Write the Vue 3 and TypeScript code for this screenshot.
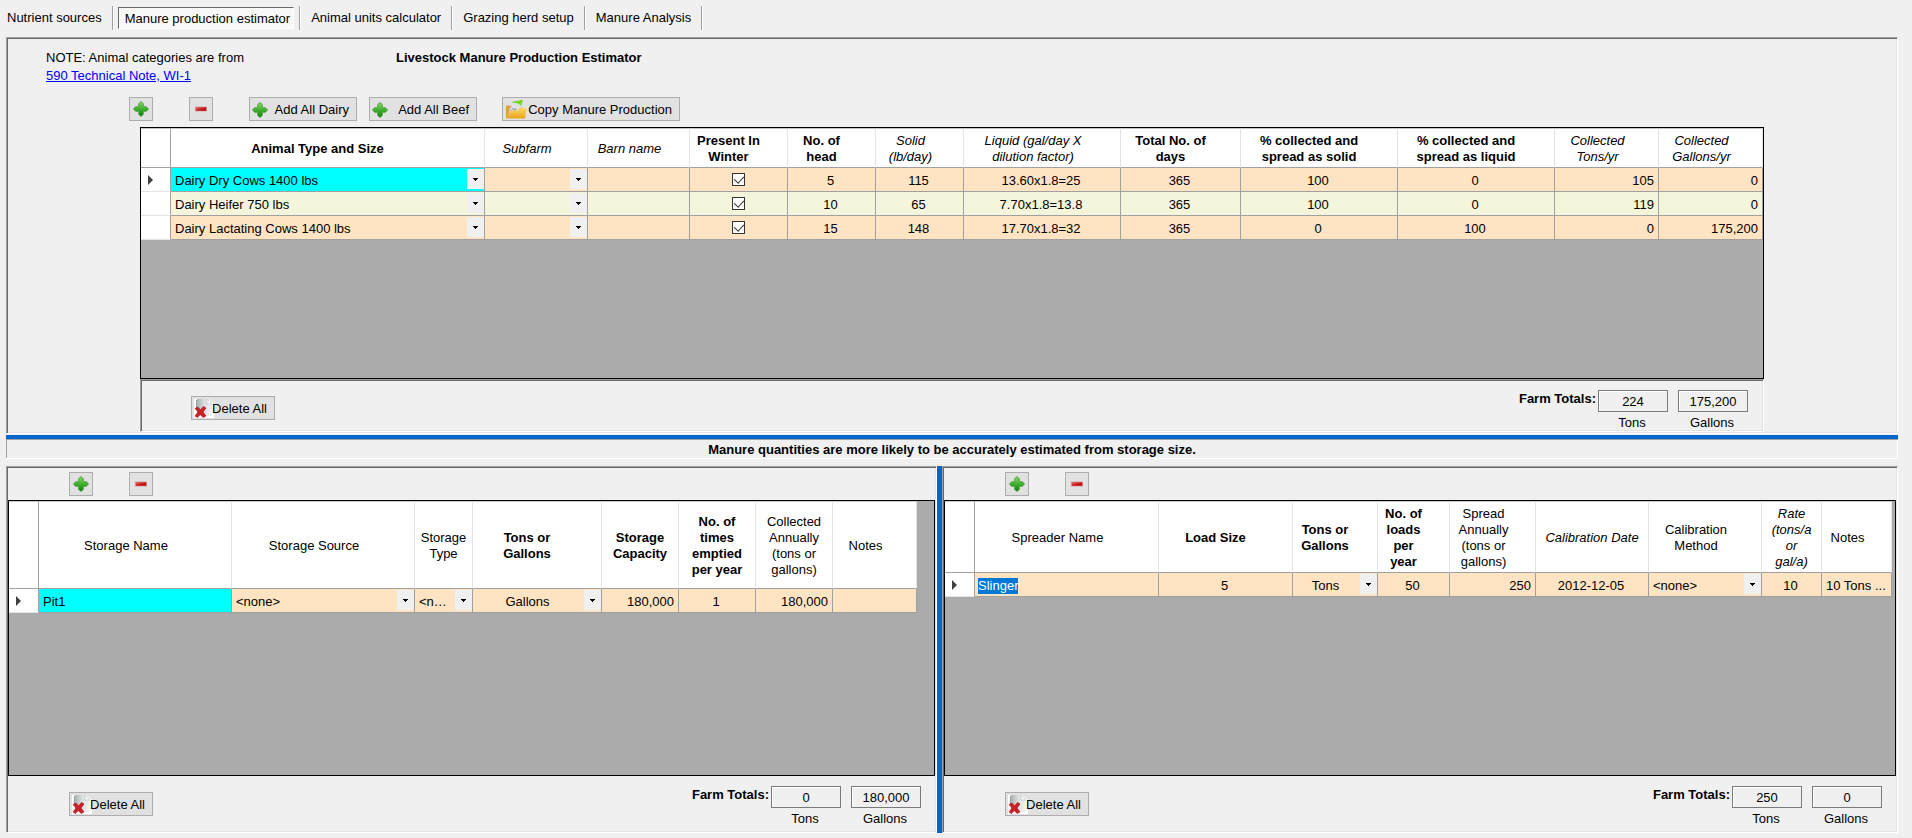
<script setup lang="ts">
import { onMounted, ref } from 'vue'

interface Column {
  lines: string[]
  width: number
  look?: 'bold' | 'italic'
  align?: 'center' | 'end'
  kind?: 'select' | 'check' | 'input'
  snug?: boolean
}

interface GridModel {
  label: string
  size: 'low' | 'tall' | 'mid'
  stretch?: boolean
  columns: Column[]
  rows: (string | boolean)[][]
  highlightFirst?: boolean
}

interface Total {
  id: string
  unit: string
  value: string
}

const tabs = [
  'Nutrient sources',
  'Manure production estimator',
  'Animal units calculator',
  'Grazing herd setup',
  'Manure Analysis',
]
const activeTab = ref(1)

const animals: GridModel = {
  label: 'Livestock manure production',
  size: 'low',
  stretch: true,
  highlightFirst: true,
  columns: [
    { lines: ['Animal Type and Size'], width: 314, look: 'bold', kind: 'select' },
    { lines: ['Subfarm'], width: 103, look: 'italic', kind: 'select' },
    { lines: ['Barn name'], width: 102, look: 'italic' },
    { lines: ['Present In', 'Winter'], width: 98, look: 'bold', align: 'center', kind: 'check' },
    { lines: ['No. of', 'head'], width: 88, look: 'bold', align: 'center' },
    { lines: ['Solid', '(lb/day)'], width: 88, look: 'italic', align: 'center' },
    { lines: ['Liquid (gal/day X', 'dilution factor)'], width: 157, look: 'italic', align: 'center' },
    { lines: ['Total No. of', 'days'], width: 120, look: 'bold', align: 'center' },
    { lines: ['% collected and', 'spread as solid'], width: 157, look: 'bold', align: 'center' },
    { lines: ['% collected and', 'spread as liquid'], width: 157, look: 'bold', align: 'center' },
    { lines: ['Collected', 'Tons/yr'], width: 104, look: 'italic', align: 'end' },
    { lines: ['Collected', 'Gallons/yr'], width: 104, look: 'italic', align: 'end' },
  ],
  rows: [
    ['Dairy Dry Cows 1400 lbs', '', '', true, '5', '115', '13.60x1.8=25', '365', '100', '0', '105', '0'],
    ['Dairy Heifer 750 lbs', '', '', true, '10', '65', '7.70x1.8=13.8', '365', '100', '0', '119', '0'],
    ['Dairy Lactating Cows 1400 lbs', '', '', true, '15', '148', '17.70x1.8=32', '365', '0', '100', '0', '175,200'],
  ],
}

const storage: GridModel = {
  label: 'Manure storage',
  size: 'tall',
  highlightFirst: true,
  columns: [
    { lines: ['Storage Name'], width: 193 },
    { lines: ['Storage Source'], width: 183, kind: 'select' },
    { lines: ['Storage', 'Type'], width: 58, kind: 'select', snug: true },
    { lines: ['Tons or', 'Gallons'], width: 129, look: 'bold', align: 'center', kind: 'select' },
    { lines: ['Storage', 'Capacity'], width: 77, look: 'bold', align: 'end', snug: true },
    { lines: ['No. of', 'times', 'emptied', 'per year'], width: 77, look: 'bold', align: 'center', snug: true },
    { lines: ['Collected', 'Annually', '(tons or', 'gallons)'], width: 77, align: 'end', snug: true },
    { lines: ['Notes'], width: 84 },
  ],
  rows: [['Pit1', '<none>', '<none>', 'Gallons', '180,000', '1', '180,000', '']],
}

const spreaders: GridModel = {
  label: 'Manure spreaders',
  size: 'mid',
  columns: [
    { lines: ['Spreader Name'], width: 184, kind: 'input' },
    { lines: ['Load Size'], width: 134, look: 'bold', align: 'center' },
    { lines: ['Tons or', 'Gallons'], width: 85, look: 'bold', align: 'center', kind: 'select' },
    { lines: ['No. of', 'loads', 'per', 'year'], width: 72, look: 'bold', align: 'center' },
    { lines: ['Spread', 'Annually', '(tons or', 'gallons)'], width: 86, align: 'end' },
    { lines: ['Calibration Date'], width: 113, look: 'italic', align: 'center', snug: true },
    { lines: ['Calibration', 'Method'], width: 113, kind: 'select' },
    { lines: ['Rate', '(tons/a', 'or', 'gal/a)'], width: 60, look: 'italic', align: 'center', snug: true },
    { lines: ['Notes'], width: 70 },
  ],
  rows: [['Slinger', '5', 'Tons', '50', '250', '2012-12-05', '<none>', '10', '10 Tons ...']],
}

const sections: { key: string; grid: GridModel; totals: Total[] }[] = [
  {
    key: 'animals',
    grid: animals,
    totals: [
      { id: 'farm-tons', unit: 'Tons', value: '224' },
      { id: 'farm-gallons', unit: 'Gallons', value: '175,200' },
    ],
  },
  {
    key: 'storage',
    grid: storage,
    totals: [
      { id: 'storage-tons', unit: 'Tons', value: '0' },
      { id: 'storage-gallons', unit: 'Gallons', value: '180,000' },
    ],
  },
  {
    key: 'spreaders',
    grid: spreaders,
    totals: [
      { id: 'spreader-tons', unit: 'Tons', value: '250' },
      { id: 'spreader-gallons', unit: 'Gallons', value: '0' },
    ],
  },
]

onMounted(() => {
  document.querySelector<HTMLInputElement>('.cell-input')?.select()
})
</script>

<template>
  <div class="page">
    <svg class="defs" aria-hidden="true">
      <defs>
        <linearGradient id="green" x1="0" y1="0" x2="0" y2="1">
          <stop offset="0" stop-color="#8fd66c" />
          <stop offset="0.5" stop-color="#3fb02c" />
          <stop offset="1" stop-color="#0f7d10" />
        </linearGradient>
        <linearGradient id="red" x1="0" y1="0" x2="1" y2="1">
          <stop offset="0" stop-color="#d98080" />
          <stop offset="0.5" stop-color="#cf1f1f" />
          <stop offset="1" stop-color="#a50d0d" />
        </linearGradient>
        <linearGradient id="folder" x1="0" y1="0" x2="0" y2="1">
          <stop offset="0" stop-color="#fcd76a" />
          <stop offset="1" stop-color="#e8a31a" />
        </linearGradient>
        <linearGradient id="paper" x1="0" y1="0" x2="1" y2="0">
          <stop offset="0" stop-color="#a9b3b3" />
          <stop offset="0.5" stop-color="#dde1e1" />
          <stop offset="1" stop-color="#f4f4f4" />
        </linearGradient>
        <symbol id="plus" viewBox="0 0 16 16">
          <path d="M8 .5 10.3 2.6V5.7H13.4L15.5 8 13.4 10.3H10.3V13.4L8 15.5 5.7 13.4V10.3H2.6L.5 8 2.6 5.7H5.7V2.6Z" fill="url(#green)" stroke="#3f9a35" stroke-width=".8" stroke-linejoin="round" />
        </symbol>
        <symbol id="minus" viewBox="0 0 16 16">
          <rect x="2.5" y="6" width="11" height="4" fill="url(#red)" stroke="#c77" stroke-width=".5" />
        </symbol>
        <symbol id="copy" viewBox="0 0 22 20">
          <path d="M1 18V6.5Q1 5.5 2 5.5H5L7 7H17V18Z" fill="#dda43a" />
          <path d="M3.5 15 5 8 9 6 16 7V13Z" fill="#dfe4e8" />
          <path d="M6 11 8 8 9 10 11 8M7 12 12 9" stroke="#9aa4ac" fill="none" />
          <path d="M6 3Q10 0 15 1L14 0H18L16 6 14 4Q10 2 6 3Z" fill="#78d329" />
          <path d="M5.5 10.5H12L14 8H21.5L20 18.5H1.2Z" fill="url(#folder)" />
        </symbol>
        <symbol id="remove" viewBox="0 0 20 19">
          <path d="M0 0H14L20 5V19H0Z" fill="#fff" />
          <path d="M3 0H13L18 5V17H3Z" fill="url(#paper)" />
          <path d="M13 0V5H18Z" fill="#fff" stroke="#b8c0c0" stroke-width=".7" />
          <path d="M2.5 1V9" stroke="#98a3a3" />
          <path d="M1 9.5 4 8 6.5 11 9.5 7.5 12 9 9 13 12 17 9 18.5 6.3 15.3 3.5 18.5 1 17 4 13Z" fill="#cf2027" stroke="#9c1218" stroke-width=".6" />
        </symbol>
      </defs>
    </svg>

    <nav class="tabs" aria-label="Sections">
      <div v-for="(tab, i) in tabs" :key="tab" class="tab-slot">
        <button type="button" class="tab" :class="{ active: i === activeTab }" @click="activeTab = i">{{ tab }}</button>
      </div>
    </nav>

    <main class="content">
      <template v-for="s in sections" :key="s.key">
        <section class="panel sunken" :class="{ wide: s.key === 'animals' }">
          <div v-if="s.key === 'animals'" class="intro">
            <p class="note">NOTE: Animal categories are from<br /><a href="#technical-note">590 Technical Note, WI-1</a></p>
            <h1>Livestock Manure Production Estimator</h1>
          </div>
          <div class="toolbar">
            <button type="button" class="btn icon-btn" aria-label="Add row"><svg class="ic"><use href="#plus" /></svg></button>
            <button type="button" class="btn icon-btn" aria-label="Remove row"><svg class="ic"><use href="#minus" /></svg></button>
            <template v-if="s.key === 'animals'">
              <div class="pair">
                <button type="button" class="btn add-btn"><svg class="ic"><use href="#plus" /></svg>Add All Dairy</button>
                <button type="button" class="btn add-btn"><svg class="ic"><use href="#plus" /></svg>Add All Beef</button>
              </div>
              <button type="button" class="btn copy-btn"><svg class="ic-copy"><use href="#copy" /></svg>Copy Manure Production</button>
            </template>
          </div>

          <div class="grid-box">
            <table :class="[s.grid.size, { stretch: s.grid.stretch }]" :aria-label="s.grid.label">
              <colgroup>
                <col class="marker-col" />
                <col v-for="(c, i) in s.grid.columns" :key="i" :style="{ width: c.width + 'px' }" />
              </colgroup>
              <thead>
                <tr>
                  <td class="corner"></td>
                  <th v-for="(c, i) in s.grid.columns" :key="i" scope="col" :class="[c.look, { snug: c.snug }]">
                    <template v-for="(line, n) in c.lines" :key="n"><br v-if="n" />{{ line }}</template>
                  </th>
                </tr>
              </thead>
              <tbody>
                <tr v-for="(row, r) in s.grid.rows" :key="r">
                  <td class="marker">
                    <svg v-if="r === 0" width="5" height="10" viewBox="0 0 5 10"><path d="M0 0 5 5 0 10Z" fill="#404040" /></svg>
                  </td>
                  <td
                    v-for="(c, i) in s.grid.columns"
                    :key="i"
                    :class="[c.align, { control: c.kind, current: s.grid.highlightFirst && r === 0 && i === 0 }]"
                  >
                    <div v-if="c.kind === 'select'" class="combo">
                      <select :aria-label="c.lines.join(' ')"><option>{{ row[i] }}</option></select>
                      <span class="drop"><svg width="5" height="3" viewBox="0 0 5 3"><path d="M0 0H5V1H4V2H3V3H2V2H1V1H0Z" /></svg></span>
                    </div>
                    <input v-else-if="c.kind === 'check'" type="checkbox" class="check" :checked="row[i] === true" :aria-label="c.lines.join(' ')" />
                    <input v-else-if="c.kind === 'input'" type="text" class="cell-input" :value="row[i]" :aria-label="c.lines.join(' ')" />
                    <template v-else>{{ row[i] }}</template>
                  </td>
                </tr>
              </tbody>
            </table>
          </div>

          <div class="footer" :class="{ sunken: s.key === 'animals' }">
            <button type="button" class="btn delete-btn"><svg class="ic-del"><use href="#remove" /></svg>Delete All</button>
            <div class="totals">
              <strong>Farm Totals:</strong>
              <div v-for="t in s.totals" :key="t.id" class="total">
                <input :id="t.id" type="text" readonly :value="t.value" />
                <label :for="t.id">{{ t.unit }}</label>
              </div>
            </div>
          </div>
        </section>
        <p v-if="s.key === 'animals'" class="message">Manure quantities are more likely to be accurately estimated from storage size.</p>
        <div v-if="s.key === 'storage'" class="splitter"></div>
      </template>
    </main>
  </div>
</template>

<style>
body {
  margin: 0;
  background: #f0f0f0;
}
</style>

<style scoped>
.page {
  box-sizing: border-box;
  min-height: 100vh;
  display: flex;
  flex-direction: column;
  padding: 6px 14px 5px 6px;
  background: #f0f0f0;
  color: #000;
  font-family: "Liberation Sans", Arial, sans-serif;
  font-size: 13px;
  line-height: 16px;
}
.page * {
  box-sizing: border-box;
}
button,
input,
select {
  font: inherit;
  color: inherit;
  margin: 0;
}
svg {
  flex: none;
}
.defs {
  position: absolute;
  width: 0;
  height: 0;
}

.tabs {
  display: flex;
  height: 24px;
  margin-bottom: 7px;
}
.tab-slot {
  display: flex;
  align-items: center;
  padding: 0 10px 0 11px;
  border-right: 1px solid #a0a0a0;
  box-shadow: 1px 0 #fff;
}
.tab-slot:first-child {
  padding: 0 10px 0 1px;
}
.tab-slot:has(.active) {
  padding: 0 5px;
}
.tab {
  padding: 0;
  border: 0;
  background: none;
  white-space: nowrap;
}
.tab.active {
  height: 22px;
  padding: 1px 3px 0 6px;
  border: 1px solid;
  border-color: #696969 #fff #fff #696969;
  background: #f8f8f8;
}

.sunken {
  padding: 1px;
  border: 1px solid;
  border-color: #a0a0a0 #fff #fff #a0a0a0;
  box-shadow: inset 1px 1px #696969, inset -1px -1px #e3e3e3;
}
.content {
  flex: 1;
  display: grid;
  grid-template-columns: 931fr 5px 956fr;
  grid-template-rows: 397fr auto 367fr;
}
.panel {
  display: flex;
  flex-direction: column;
  min-width: 0;
}
.wide {
  grid-column: 1 / -1;
}
.message {
  grid-column: 1 / -1;
  margin: 1px 0 7px;
  height: 24px;
  padding-top: 1px;
  border-top: 4px solid #0066cc;
  border-bottom: 1px solid #fff;
  box-shadow: inset 1px 1px #a0a0a0, inset -1px 0 #fff;
  text-align: center;
  font-weight: bold;
  line-height: 20px;
}
.splitter {
  background: #0066cc;
}

.intro {
  display: flex;
  padding: 10px 38px 11px;
}
.note {
  width: 350px;
  margin: 0;
  line-height: 18px;
}
.note a {
  color: #0000ff;
}
h1 {
  margin: 0;
  font-size: 13px;
  line-height: 18px;
}

.toolbar {
  display: flex;
  gap: 36px;
  padding: 4px 61px;
}
.wide .toolbar {
  padding: 1px 121px 6px;
}
.pair {
  display: flex;
  gap: 12px;
  margin-right: -11px;
}
.btn {
  display: flex;
  align-items: center;
  justify-content: space-between;
  height: 24px;
  padding: 1px 7px 0 2px;
  border: 1px solid #adadad;
  background: #e1e1e1;
  white-space: nowrap;
}
.icon-btn {
  width: 24px;
  padding: 0;
  justify-content: center;
}
.add-btn {
  width: 108px;
}
.copy-btn {
  width: 178px;
}
.ic {
  width: 16px;
  height: 16px;
}
.ic-copy {
  width: 22px;
  height: 20px;
}
.delete-btn {
  width: 84px;
}
.ic-del {
  width: 20px;
  height: 19px;
  margin-right: -2px;
}

.grid-box {
  flex: 1;
  border: 1px solid #000;
  background: #ababab;
  overflow: hidden;
}
.wide .grid-box,
.wide .footer {
  margin: 0 132px;
}
table {
  width: 1px;
  table-layout: fixed;
  border-collapse: separate;
  border-spacing: 0;
}
table.stretch {
  width: 100%;
}
.marker-col {
  width: 30px;
}
th,
.corner {
  padding: 1px 18px 0 0;
  background: #fff;
  border-top: 1px solid #c8c8c8;
  border-right: 1px solid #e3e3e3;
  border-bottom: 1px solid #a0a0a0;
  font-weight: normal;
  white-space: nowrap;
}
th.bold {
  padding-right: 20px;
  font-weight: bold;
}
th.italic {
  font-style: italic;
}
th.snug {
  padding-right: 0;
}
.low th {
  height: 40px;
}
.tall th {
  height: 88px;
}
.mid th {
  height: 72px;
}
.corner {
  border-right-color: #a0a0a0;
}
tbody td {
  height: 24px;
  padding: 2px 3px 0 4px;
  background: #ffe4c4;
  border-right: 1px solid #a0a0a0;
  border-bottom: 1px solid #a0a0a0;
  white-space: nowrap;
}
tbody tr:nth-child(even) td {
  background: #f5f5dc;
}
tbody td.current {
  background: #00ffff;
}
tbody tr td.marker {
  padding: 0 0 0 7px;
  background: #fff;
  border-bottom-color: #e3e3e3;
}
.marker svg {
  display: block;
}
tbody td.center {
  padding: 2px 4px 0 2px;
  text-align: center;
}
tbody td.end {
  padding-right: 4px;
  text-align: right;
}
tbody tr td.control {
  padding: 0;
}
.combo {
  display: grid;
  height: 23px;
}
.combo > * {
  grid-area: 1 / 1;
}
.combo select {
  width: 100%;
  min-width: 0;
  padding: 2px 21px 0 4px;
  border: 0;
  border-radius: 0;
  outline: 0;
  background: none;
  appearance: none;
  text-overflow: ellipsis;
}
.center .combo select {
  padding: 2px 19px 0 0;
  text-align: center;
  text-align-last: center;
}
.drop {
  justify-self: end;
  display: flex;
  align-items: center;
  justify-content: center;
  width: 17px;
  height: 20px;
  margin-top: 1px;
  background: #f0f0f0;
  pointer-events: none;
}
input.check {
  display: block;
  width: 13px;
  height: 13px;
  margin: 0 auto;
  border: 1px solid #333;
  background: #fff;
  appearance: none;
}
input.check:checked::before {
  content: "";
  display: block;
  width: 5px;
  height: 8px;
  margin: 0 0 0 3px;
  border: solid #333;
  border-width: 0 1px 1px 0;
  transform: rotate(42deg);
}
.cell-input {
  display: block;
  width: 100%;
  padding: 2px 3px 0;
  border: 0;
  outline: 0;
  background: none;
}
.cell-input::selection {
  background: #0078d7;
  color: #fff;
}

.footer {
  display: flex;
  align-items: flex-start;
  justify-content: space-between;
  padding: 10px 14px 4px 61px;
}
.footer.sunken {
  padding: 10px 15px 0 50px;
}
.delete-btn {
  margin-top: 6px;
}
.totals {
  display: flex;
}
.totals strong {
  padding-top: 1px;
}
.total {
  width: 70px;
  margin-left: 10px;
  display: flex;
  flex-direction: column;
  align-items: center;
}
strong + .total {
  margin-left: 2px;
}
.total input {
  width: 100%;
  height: 22px;
  padding: 0;
  border: 1px solid #7a7a7a;
  box-shadow: inset 1px 1px #fff;
  background: #f0f0f0;
  text-align: center;
  outline: 0;
}
.total label {
  margin-top: 3px;
  padding-right: 2px;
}
</style>
